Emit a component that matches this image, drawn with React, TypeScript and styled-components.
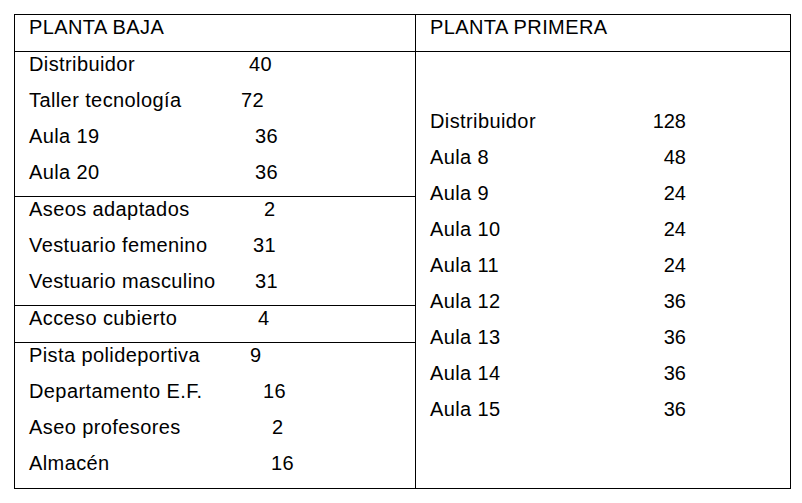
import React from "react";
import styled, { createGlobalStyle } from "styled-components";

const GlobalStyle = createGlobalStyle`
  html, body {
    margin: 0;
    padding: 0;
    background: #fff;
  }
  body {
    font-family: "Liberation Sans", Arial, sans-serif;
    color: #000;
  }
`;

type Item = { name: string; qty: string; at?: number };

// ground floor, grouped the way the sheet draws its inner lines
const plantaBaja: Item[][] = [
  [
    { name: "Distribuidor", qty: "40", at: 220 },
    { name: "Taller tecnología", qty: "72", at: 212 },
    { name: "Aula 19", qty: "36", at: 226 },
    { name: "Aula 20", qty: "36", at: 226 },
  ],
  [
    { name: "Aseos adaptados", qty: "2", at: 235 },
    { name: "Vestuario femenino", qty: "31", at: 224 },
    { name: "Vestuario masculino", qty: "31", at: 226 },
  ],
  [{ name: "Acceso cubierto", qty: "4", at: 229 }],
  [
    { name: "Pista polideportiva", qty: "9", at: 221 },
    { name: "Departamento E.F.", qty: "16", at: 234 },
    { name: "Aseo profesores", qty: "2", at: 243 },
    { name: "Almacén", qty: "16", at: 242 },
  ],
];

const plantaPrimera: Item[] = [
  { name: "Distribuidor", qty: "128" },
  { name: "Aula 8", qty: "48" },
  { name: "Aula 9", qty: "24" },
  { name: "Aula 10", qty: "24" },
  { name: "Aula 11", qty: "24" },
  { name: "Aula 12", qty: "36" },
  { name: "Aula 13", qty: "36" },
  { name: "Aula 14", qty: "36" },
  { name: "Aula 15", qty: "36" },
];

const App = () => {
  return (
    <>
      <GlobalStyle />
      <Sheet>
        <HeadCell $divider>PLANTA BAJA</HeadCell>
        <HeadCell>PLANTA PRIMERA</HeadCell>
        <BodyCell $divider>
          {plantaBaja.map((group, i) => (
            <Group key={i} $last={i === plantaBaja.length - 1}>
              {group.map((it) => (
                <Row key={it.name} $numAt={it.at ?? 220}>
                  <span>{it.name}</span>
                  <span>{it.qty}</span>
                </Row>
              ))}
            </Group>
          ))}
        </BodyCell>
        <BodyCell>
          <List>
            {plantaPrimera.map((it) => (
              <RightRow key={it.name}>
                <span>{it.name}</span>
                <Qty>{it.qty}</Qty>
              </RightRow>
            ))}
          </List>
        </BodyCell>
      </Sheet>
    </>
  );
};

export default App;

const Sheet = styled.div`
  margin: 14px 0 0 14px;
  width: 777px;
  box-sizing: border-box;
  border: 1px solid #000;
  display: grid;
  grid-template-columns: 401px 1fr;
  grid-template-rows: 37px 436px;
  font-size: 20px;
  letter-spacing: 0.4px;
`;

const HeadCell = styled.div<{ $divider?: boolean }>`
  border-bottom: 1px solid #000;
  border-right: ${(p) => (p.$divider ? "1px solid #000" : "none")};
  padding: 0 14px;
  line-height: 24px;
  height: 36px;
`;

const BodyCell = styled.div<{ $divider?: boolean }>`
  border-right: ${(p) => (p.$divider ? "1px solid #000" : "none")};
  display: flex;
  flex-direction: column;
`;

const Group = styled.div<{ $last?: boolean }>`
  border-bottom: ${(p) => (p.$last ? "none" : "1px solid #000")};
  padding: 0 14px;
`;

const Row = styled.div<{ $numAt: number }>`
  display: grid;
  grid-template-columns: ${(p) => p.$numAt}px auto;
  height: 36px;
  line-height: 24px;
  white-space: nowrap;
`;

const List = styled.div`
  padding: 57px 14px 0 14px;
`;

const RightRow = styled.div`
  display: grid;
  grid-template-columns: 1fr auto;
  width: 256px;
  height: 36px;
  line-height: 24px;
`;

const Qty = styled.span`
  text-align: right;
  letter-spacing: 0;
`;
